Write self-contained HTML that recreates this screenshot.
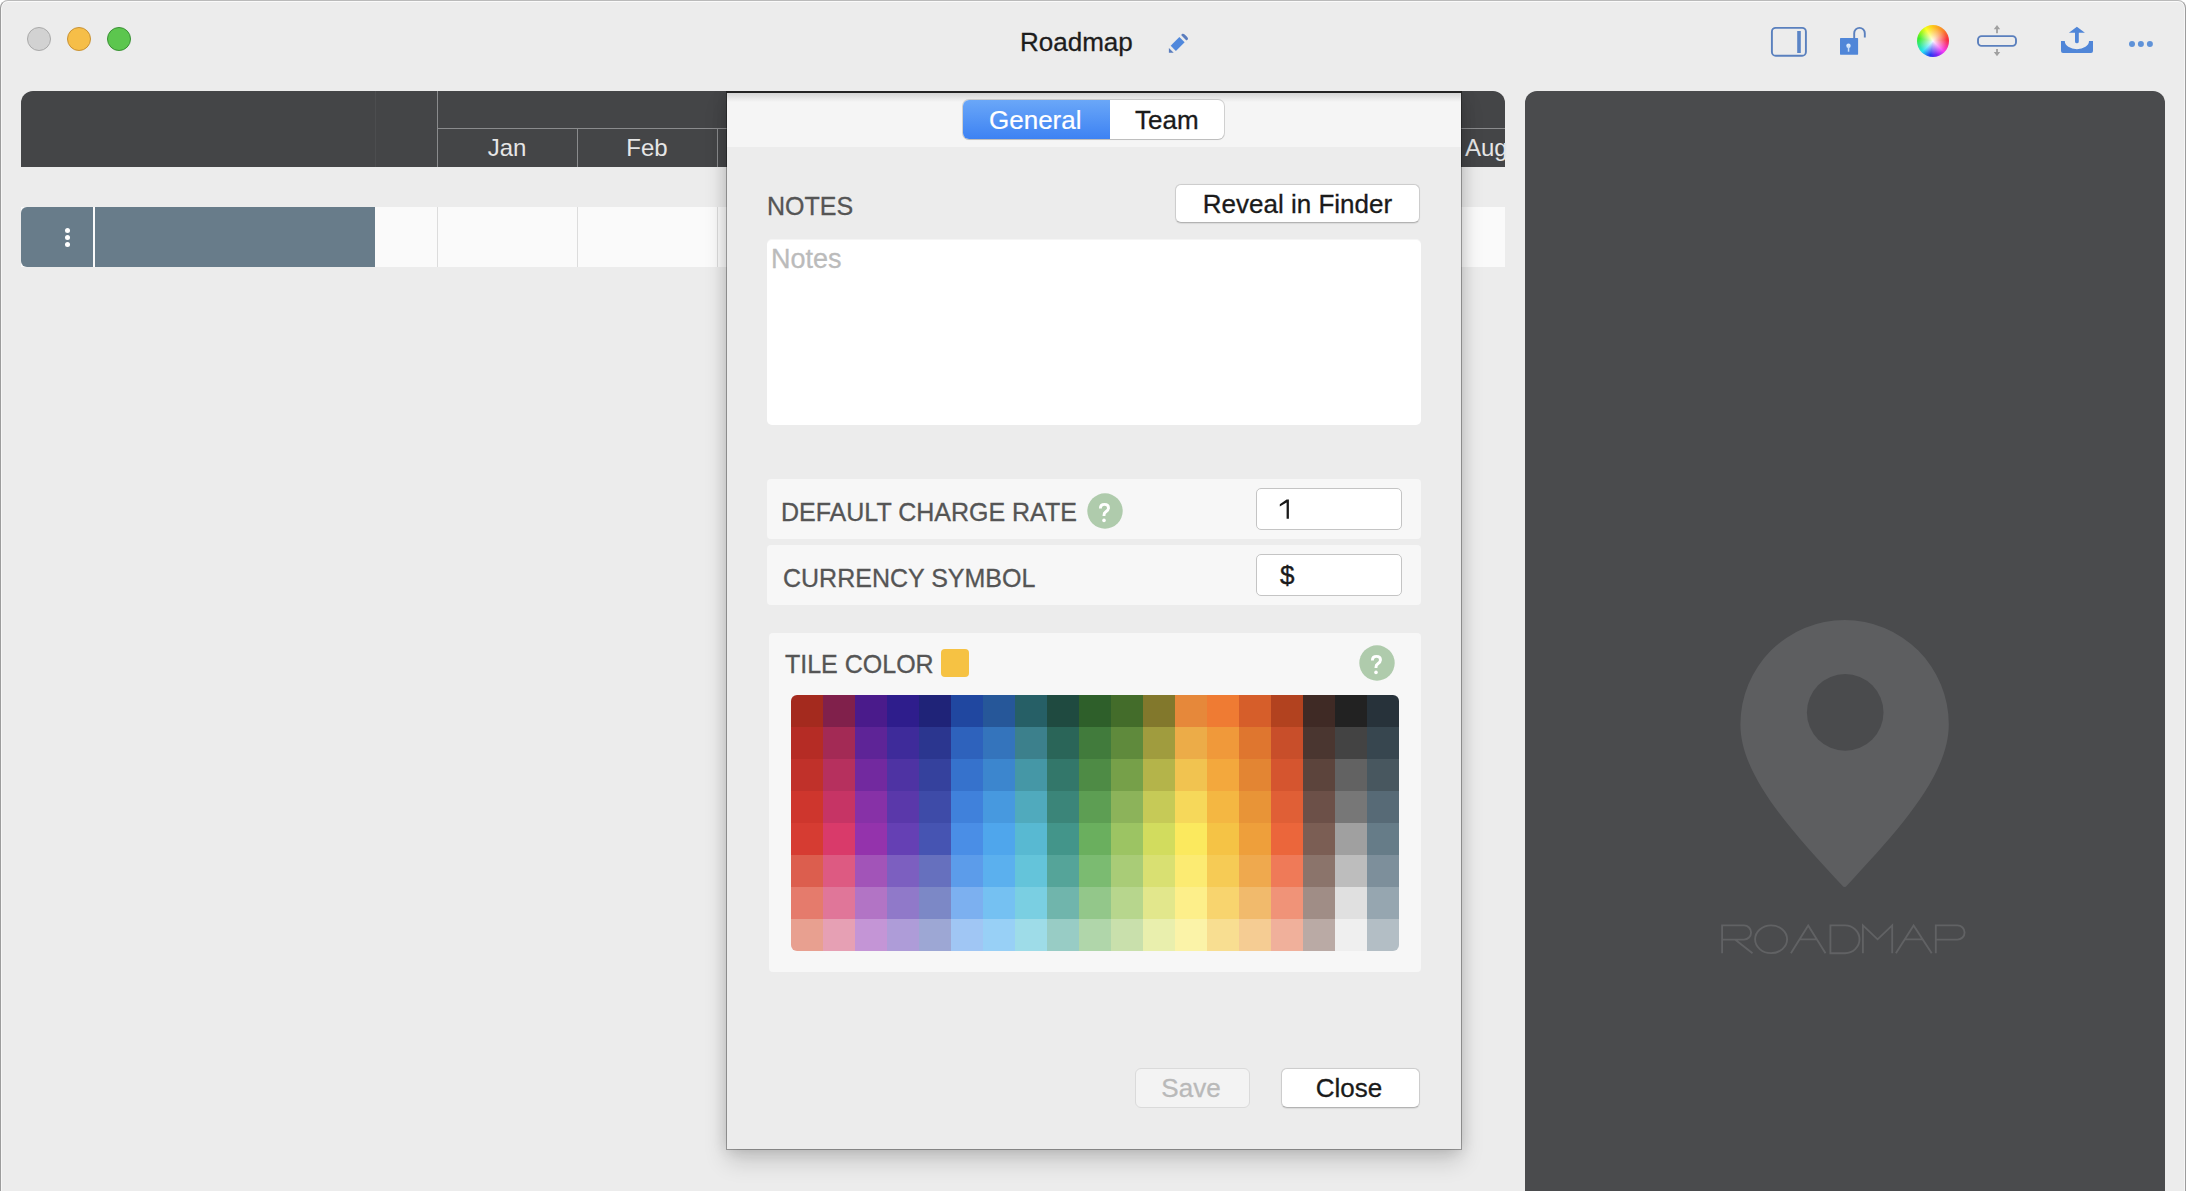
<!DOCTYPE html>
<html><head><meta charset="utf-8">
<style>
*{box-sizing:border-box;margin:0;padding:0}
html,body{width:2186px;height:1191px;overflow:hidden;background:#ffffff}
body{font-family:"Liberation Sans",sans-serif;position:relative}
.abs{position:absolute}
#win{position:absolute;left:0;top:0;width:2186px;height:1191px;background:#ECECEC;border-radius:8px 8px 0 0;overflow:hidden}
#wb{position:absolute;left:0;top:0;width:2186px;height:1200px;border:1px solid #9c9c9c;border-top-color:#bababa;border-radius:8px 8px 0 0;box-shadow:inset 0 1px 0 rgba(255,255,255,0.75),inset 1px 0 0 rgba(255,255,255,0.5),inset -1px 0 0 rgba(255,255,255,0.5);pointer-events:none}
.tl{position:absolute;top:27px;width:24px;height:24px;border-radius:50%}
.txt{position:absolute;white-space:nowrap;line-height:1}
.hdr{position:absolute;left:21px;top:91px;width:1484px;height:76px;background:#444547;border-radius:12px 12px 0 0}
.vl{position:absolute;width:1px;background:#8a8b8d}
.mon{position:absolute;color:#e6e6e6;font-size:24px;line-height:1;text-align:center;width:140px}
.row{position:absolute;left:21px;top:207px;width:1484px;height:60px;background:#FAFAFA}
#dlg{position:absolute;left:727px;top:91px;width:734px;height:1058px;background:#ECECEC;box-shadow:0 0 14px rgba(0,0,0,0.16),0 12px 22px rgba(0,0,0,0.16),0 0 0 1px rgba(0,0,0,0.3);clip-path:inset(0 -80px -80px -80px)}
.panel{position:absolute;background:#F7F7F7;border-radius:4px}
.lbl{position:absolute;white-space:nowrap;line-height:1;color:#555555;font-size:25px;-webkit-text-stroke:0.3px #555555}
.inp{position:absolute;background:#fff;border:1px solid #c4c4c4;border-radius:5px}
.btn{position:absolute;-webkit-text-stroke:0.3px currentColor;background:#fff;border-radius:6px;border:1px solid #cdcdcd;border-bottom-color:#b3b3b3;box-shadow:0 0.5px 1px rgba(0,0,0,0.08);text-align:center;color:#1a1a1a;font-size:26px;line-height:1}
.help{position:absolute;width:36px;height:36px;border-radius:50%;background:#A9C9AA;color:#fff;font-weight:bold;font-size:24px;line-height:36px;text-align:center}
#grid{position:absolute;left:791px;top:695px;width:608px;height:256px;border-radius:6px;overflow:hidden;display:grid;grid-template-columns:repeat(19,32px);grid-template-rows:repeat(8,32px)}
#grid i{display:block;width:32px;height:32px}
#rp{position:absolute;left:1525px;top:91px;width:640px;height:1100px;background:#4A4B4D;border-radius:12px 12px 0 0}
</style></head>
<body>
<div id="win">
  <!-- traffic lights -->
  <div class="tl" style="left:27px;background:#D2D2D2;border:1px solid #A9A9A9"></div>
  <div class="tl" style="left:67px;background:#F6BE48;border:1px solid #C89236"></div>
  <div class="tl" style="left:107px;background:#5CC64E;border:1px solid #3A9035"></div>

  <div class="txt" style="left:1020px;top:29px;font-size:26px;color:#1d1d1d;-webkit-text-stroke:0.3px #1d1d1d">Roadmap</div>
  <!-- pencil -->
  <svg class="abs" style="left:1160px;top:28px" width="36" height="32" viewBox="1160 28 36 32">
    <g transform="translate(1168.9,52.7) rotate(-45)">
      <path d="M0 0 L3.4 -3.4 V3.4 Z" fill="#5A7DBE"/>
      <rect x="6.2" y="-3.7" width="12.3" height="7.4" fill="#5088DC"/>
      <path d="M21.2 -3.8 H22.6 A1.5 3.8 0 0 1 22.6 3.8 H21.2 Z" fill="#5A7DBE"/>
      <rect x="21.2" y="-3.8" width="2.4" height="7.6" rx="1.2" fill="#5A7DBE"/>
    </g>
  </svg>

  <!-- toolbar icons -->
  <svg class="abs" style="left:1760px;top:20px" width="410" height="44" viewBox="1760 20 410 44">
    <rect x="1771.9" y="27.9" width="34" height="27.9" rx="3.8" fill="none" stroke="#5A80BE" stroke-width="1.9"/>
    <rect x="1797.2" y="31" width="3.6" height="22" fill="#5A84C6"/>
    <rect x="1840" y="38.1" width="18.1" height="16.6" rx="0.6" fill="#5086D8"/>
    <path d="M1854.2 38.5 V33.2 A5.3 5.3 0 0 1 1864.8 33.2 V37.6" fill="none" stroke="#5A80BE" stroke-width="1.9"/>
    <circle cx="1848.5" cy="45.7" r="2.2" fill="#DDEBFB"/>
    <rect x="1847.8" y="45.7" width="1.5" height="6" fill="#C8DDF7"/>
    <rect x="1978" y="36.1" width="38" height="9.8" rx="3.6" fill="none" stroke="#5A7FBD" stroke-width="1.9"/>
    <path d="M1997 25 L2000.2 29.2 H1997.9 V33.2 H1996.1 V29.2 H1993.8 Z" fill="#A0A0A0"/>
    <path d="M1997 56.2 L2000.2 52 H1997.9 V49.1 H1996.1 V52 H1993.8 Z" fill="#A0A0A0"/>
    <path d="M2061 41 H2064.8 A12.1 8.3 0 0 0 2089 41 H2093 V51 A2 2 0 0 1 2091 53 H2063 A2 2 0 0 1 2061 51 Z" fill="#5086D8"/>
    <path d="M2076.9 26.8 L2084.9 32.8 H2078.8 V41.4 A1.9 1.9 0 0 1 2075 41.4 V32.8 H2068.9 Z" fill="#5086D8"/>
    <circle cx="2132" cy="44" r="3" fill="#5F92D8"/>
    <circle cx="2140.9" cy="44" r="3" fill="#5F92D8"/>
    <circle cx="2149.9" cy="44" r="3" fill="#5F92D8"/>
  </svg>
  <div class="abs" style="left:1917px;top:25px;width:32px;height:32px;border-radius:50%;background:conic-gradient(hsl(45,100%,55%) 0deg,hsl(25,95%,58%) 45deg,hsl(355,95%,58%) 85deg,hsl(300,90%,60%) 135deg,hsl(265,90%,55%) 165deg,hsl(235,90%,55%) 190deg,hsl(185,90%,55%) 225deg,hsl(115,85%,55%) 280deg,hsl(62,100%,55%) 330deg,hsl(45,100%,55%) 360deg)"></div>
  <div class="abs" style="left:1917px;top:25px;width:32px;height:32px;border-radius:50%;background:radial-gradient(circle,rgba(255,255,255,0.95) 0,rgba(255,255,255,0.55) 25%,rgba(255,255,255,0) 62%,rgba(0,0,0,0.08) 100%)"></div>

  <!-- header -->
  <div class="hdr"></div>
  <div class="vl" style="left:375px;top:91px;height:76px;background:#4c4d4f"></div>
  <div class="vl" style="left:437px;top:91px;height:76px"></div>
  <div class="abs" style="left:437px;top:128px;width:1068px;height:1px;background:#8a8b8d"></div>
  <div class="vl" style="left:577px;top:128px;height:39px"></div>
  <div class="vl" style="left:717px;top:128px;height:39px"></div>
  <div class="mon" style="left:437px;top:136px">Jan</div>
  <div class="mon" style="left:577px;top:136px">Feb</div>
  <div class="txt" style="left:1465px;top:136px;font-size:24px;color:#e6e6e6">Aug</div>

  <!-- row -->
  <div class="row"></div>
  <div class="abs" style="left:21px;top:207px;width:72px;height:60px;background:#687C8A;border-radius:6px 0 0 6px"></div>
  <div class="abs" style="left:95px;top:207px;width:280px;height:60px;background:#687C8A"></div>
  <div class="abs" style="left:65px;top:228px;width:5px;height:5px;border-radius:50%;background:#fff"></div>
  <div class="abs" style="left:65px;top:235px;width:5px;height:5px;border-radius:50%;background:#fff"></div>
  <div class="abs" style="left:65px;top:242px;width:5px;height:5px;border-radius:50%;background:#fff"></div>
  <div class="vl" style="left:437px;top:207px;height:60px;background:#dcdcdc"></div>
  <div class="vl" style="left:577px;top:207px;height:60px;background:#dcdcdc"></div>
  <div class="vl" style="left:717px;top:207px;height:60px;background:#dcdcdc"></div>

  <!-- right panel -->
  <div id="rp"></div>
  <svg class="abs" style="left:1700px;top:600px" width="300" height="380" viewBox="1700 600 300 380">
    <path d="M1740.4 724.3 A104.2 104.2 0 0 1 1948.8 724.3 C1948.8 774.3 1900.6 828 1847 885.5 Q1844.6 888.5 1842.2 885.5 C1788.6 828 1740.4 774.3 1740.4 724.3 Z" fill="#5D5E60"/>
    <circle cx="1845.2" cy="712.4" r="38.3" fill="#4A4B4D"/>
    <g fill="none" stroke="#616264" stroke-width="1.85" stroke-linejoin="miter">
      <path d="M1722.1 953.2 V925.4 H1744 A7.1 7.1 0 0 1 1744 939.6 H1722.1 M1735 939.6 L1752.5 953.2"/>
      <ellipse cx="1771.1" cy="939.3" rx="16" ry="13.9"/>
      <path d="M1790.9 953.2 L1808.2 925.4 L1825.5 953.2 M1799.5 939.3 H1817"/>
      <path d="M1830.4 925.4 H1845 A14.5 13.9 0 0 1 1845 953.2 H1830.4 Z"/>
      <path d="M1862.9 953.2 V925.4 L1877.6 939.3 L1892.2 925.4 V953.2"/>
      <path d="M1895.9 953.2 L1913.6 925.4 L1931.7 953.2 M1904.6 939.3 H1922.8"/>
      <path d="M1935.8 953.2 V925.4 H1957.5 A7.1 7.1 0 0 1 1957.5 939.6 H1935.8"/>
    </g>
  </svg>
</div>
<div id="wb"></div>

<!-- dialog -->
<div id="dlg">
  <div class="abs" style="left:0;top:2px;width:734px;height:54px;background:#F5F5F5"></div>
  <div class="abs" style="left:0;top:2px;width:734px;height:9px;background:linear-gradient(#d4d4d4,#F5F5F5)"></div>
  <div class="abs" style="left:-1px;top:0;width:736px;height:2px;background:#232323"></div>
</div>
<!-- segmented -->
<div class="abs" style="left:963px;top:100px;width:261px;height:39px;border-radius:6px;background:#fff;box-shadow:0 0 0 1px rgba(0,0,0,0.14),0 1px 1px rgba(0,0,0,0.1)"></div>
<div class="abs" style="left:963px;top:100px;width:147px;height:39px;border-radius:6px 0 0 6px;background:linear-gradient(#6AA7F8,#3D82F3)"></div>
<div class="txt" style="left:989px;top:107px;font-size:26px;color:#fff;-webkit-text-stroke:0.2px #fff">General</div>
<div class="txt" style="left:1135px;top:107px;font-size:26px;color:#1a1a1a;-webkit-text-stroke:0.3px #1a1a1a">Team</div>

<div class="lbl" style="left:767px;top:194px">NOTES</div>
<div class="btn" style="left:1175px;top:184px;width:245px;height:39px;padding-top:6px">Reveal in Finder</div>
<div class="abs" style="left:767px;top:239px;width:654px;height:186px;background:#fff;border-radius:5px;box-shadow:inset 0 1px 0 rgba(0,0,0,0.04)"></div>
<div class="txt" style="left:771px;top:246px;font-size:27px;color:#BBBBBB;-webkit-text-stroke:0.3px #BBBBBB">Notes</div>

<div class="panel" style="left:767px;top:479px;width:654px;height:60px"></div>
<div class="lbl" style="left:781px;top:500px">DEFAULT CHARGE RATE</div>
<svg class="abs" style="left:1087px;top:493px" width="36" height="36" viewBox="-18 -18 36 36"><circle r="17.7" fill="#AFCBAC"/><path d="M-4.6 -2.6 C-4.6 -5.3 -2.9 -6.6 -0.5 -6.6 C2 -6.6 3.5 -5 3.5 -3 C3.5 -1 2.2 -0.1 0.6 1 C-0.6 1.8 -1 2.6 -1 4.2 V5" fill="none" stroke="#fff" stroke-width="2.9" stroke-linecap="butt"/><circle cx="-1" cy="9.4" r="1.8" fill="#fff"/></svg>
<div class="inp" style="left:1256px;top:488px;width:146px;height:42px"></div>
<svg class="abs" style="left:1276px;top:496px" width="16" height="26" viewBox="1276 496 16 26"><path d="M1286.6 499.6 H1288.9 V518.8 H1286.6 V502.6 L1279.8 506.6 V504.2 Z" fill="#1a1a1a"/></svg>

<div class="panel" style="left:767px;top:545px;width:654px;height:60px"></div>
<div class="lbl" style="left:783px;top:566px">CURRENCY SYMBOL</div>
<div class="inp" style="left:1256px;top:554px;width:146px;height:42px"></div>
<div class="txt" style="left:1280px;top:562px;font-size:26px;color:#1a1a1a;-webkit-text-stroke:0.4px #1a1a1a">$</div>

<div class="panel" style="left:769px;top:633px;width:652px;height:339px"></div>
<div class="lbl" style="left:785px;top:652px">TILE COLOR</div>
<div class="abs" style="left:941px;top:649px;width:28px;height:28px;border-radius:4px;background:#F6C243"></div>
<svg class="abs" style="left:1359px;top:645px" width="36" height="36" viewBox="-18 -18 36 36"><circle r="17.7" fill="#AFCBAC"/><path d="M-4.6 -2.6 C-4.6 -5.3 -2.9 -6.6 -0.5 -6.6 C2 -6.6 3.5 -5 3.5 -3 C3.5 -1 2.2 -0.1 0.6 1 C-0.6 1.8 -1 2.6 -1 4.2 V5" fill="none" stroke="#fff" stroke-width="2.9" stroke-linecap="butt"/><circle cx="-1" cy="9.4" r="1.8" fill="#fff"/></svg>
<div id="grid"><i style="background:#A42A1E"></i><i style="background:#80204B"></i><i style="background:#4A1B8B"></i><i style="background:#2E1D8C"></i><i style="background:#1F2378"></i><i style="background:#2047A0"></i><i style="background:#265799"></i><i style="background:#265F66"></i><i style="background:#1F4A40"></i><i style="background:#2E5F2A"></i><i style="background:#436C2A"></i><i style="background:#82782C"></i><i style="background:#E6883A"></i><i style="background:#EF7B33"></i><i style="background:#D65E2A"></i><i style="background:#B2421F"></i><i style="background:#3F2A25"></i><i style="background:#222222"></i><i style="background:#27323A"></i><i style="background:#B52C25"></i><i style="background:#A32A55"></i><i style="background:#5E2497"></i><i style="background:#3E2B9A"></i><i style="background:#2B368F"></i><i style="background:#2E62BC"></i><i style="background:#3474BC"></i><i style="background:#3C808C"></i><i style="background:#2A6558"></i><i style="background:#417B3C"></i><i style="background:#5F8A3C"></i><i style="background:#A09C3E"></i><i style="background:#ECAC48"></i><i style="background:#F0993A"></i><i style="background:#DF762F"></i><i style="background:#C84E2A"></i><i style="background:#4A3630"></i><i style="background:#434343"></i><i style="background:#37464F"></i><i style="background:#C0312A"></i><i style="background:#B6305E"></i><i style="background:#72299F"></i><i style="background:#4E33A3"></i><i style="background:#35419D"></i><i style="background:#3672CC"></i><i style="background:#3C86CE"></i><i style="background:#4597A6"></i><i style="background:#33776A"></i><i style="background:#4E8B45"></i><i style="background:#76A049"></i><i style="background:#B4B44A"></i><i style="background:#F1C350"></i><i style="background:#F3A83D"></i><i style="background:#E38533"></i><i style="background:#D5552F"></i><i style="background:#5C443C"></i><i style="background:#626262"></i><i style="background:#48575F"></i><i style="background:#CE362D"></i><i style="background:#C63465"></i><i style="background:#8731A7"></i><i style="background:#5A38AA"></i><i style="background:#3E4BA8"></i><i style="background:#4081DB"></i><i style="background:#4799DF"></i><i style="background:#50AABD"></i><i style="background:#3B8579"></i><i style="background:#5D9E53"></i><i style="background:#8CB35A"></i><i style="background:#C6CA57"></i><i style="background:#F6D85A"></i><i style="background:#F4B742"></i><i style="background:#E89437"></i><i style="background:#E05F36"></i><i style="background:#6C5048"></i><i style="background:#777777"></i><i style="background:#576A76"></i><i style="background:#D63C32"></i><i style="background:#D93A6A"></i><i style="background:#9433AC"></i><i style="background:#6540B4"></i><i style="background:#4654B2"></i><i style="background:#4A8EE6"></i><i style="background:#4FA6EC"></i><i style="background:#58B9D2"></i><i style="background:#43958A"></i><i style="background:#6AAF5E"></i><i style="background:#9CC463"></i><i style="background:#D2DC5E"></i><i style="background:#FBE95E"></i><i style="background:#F5C345"></i><i style="background:#EE9F3B"></i><i style="background:#EB663B"></i><i style="background:#7B5E54"></i><i style="background:#A0A0A0"></i><i style="background:#667C88"></i><i style="background:#DC5E4E"></i><i style="background:#DD5A82"></i><i style="background:#A254B8"></i><i style="background:#7C5FC0"></i><i style="background:#6670BE"></i><i style="background:#5C9CEA"></i><i style="background:#5BB0EE"></i><i style="background:#64C4DA"></i><i style="background:#55A499"></i><i style="background:#7BBB71"></i><i style="background:#A9CC77"></i><i style="background:#D9E072"></i><i style="background:#FCEB72"></i><i style="background:#F6CB55"></i><i style="background:#EFA94E"></i><i style="background:#EF7A58"></i><i style="background:#8B746B"></i><i style="background:#BDBDBD"></i><i style="background:#7D8F9B"></i><i style="background:#E57B6C"></i><i style="background:#E07699"></i><i style="background:#B274C5"></i><i style="background:#9079C9"></i><i style="background:#7C88C6"></i><i style="background:#7CB0F0"></i><i style="background:#75C1F2"></i><i style="background:#7ACFE2"></i><i style="background:#70B5AC"></i><i style="background:#93C78A"></i><i style="background:#B7D68D"></i><i style="background:#E2E78C"></i><i style="background:#FDEF8A"></i><i style="background:#F8D46E"></i><i style="background:#F1BA6C"></i><i style="background:#F09378"></i><i style="background:#A08D86"></i><i style="background:#E0E0E0"></i><i style="background:#96A6B0"></i><i style="background:#E8A090"></i><i style="background:#E6A0B4"></i><i style="background:#C495D6"></i><i style="background:#AE9CD8"></i><i style="background:#9DA7D4"></i><i style="background:#A0C6F4"></i><i style="background:#98D0F6"></i><i style="background:#9EDCE8"></i><i style="background:#98CCC5"></i><i style="background:#B0D6AA"></i><i style="background:#C9E0AC"></i><i style="background:#E9EFAD"></i><i style="background:#FBF3A8"></i><i style="background:#F8DE91"></i><i style="background:#F5CC93"></i><i style="background:#F0B09B"></i><i style="background:#BAAAA5"></i><i style="background:#EFEFEF"></i><i style="background:#B3BEC5"></i></div>

<div class="btn" style="left:1135px;top:1068px;width:115px;height:40px;padding-top:6px;padding-right:3px;color:#b9b9b9;background:#F3F3F3;border-color:#dadada;box-shadow:none">Save</div>
<div class="btn" style="left:1281px;top:1068px;width:139px;height:40px;padding-top:6px;padding-right:3px">Close</div>


</body></html>
